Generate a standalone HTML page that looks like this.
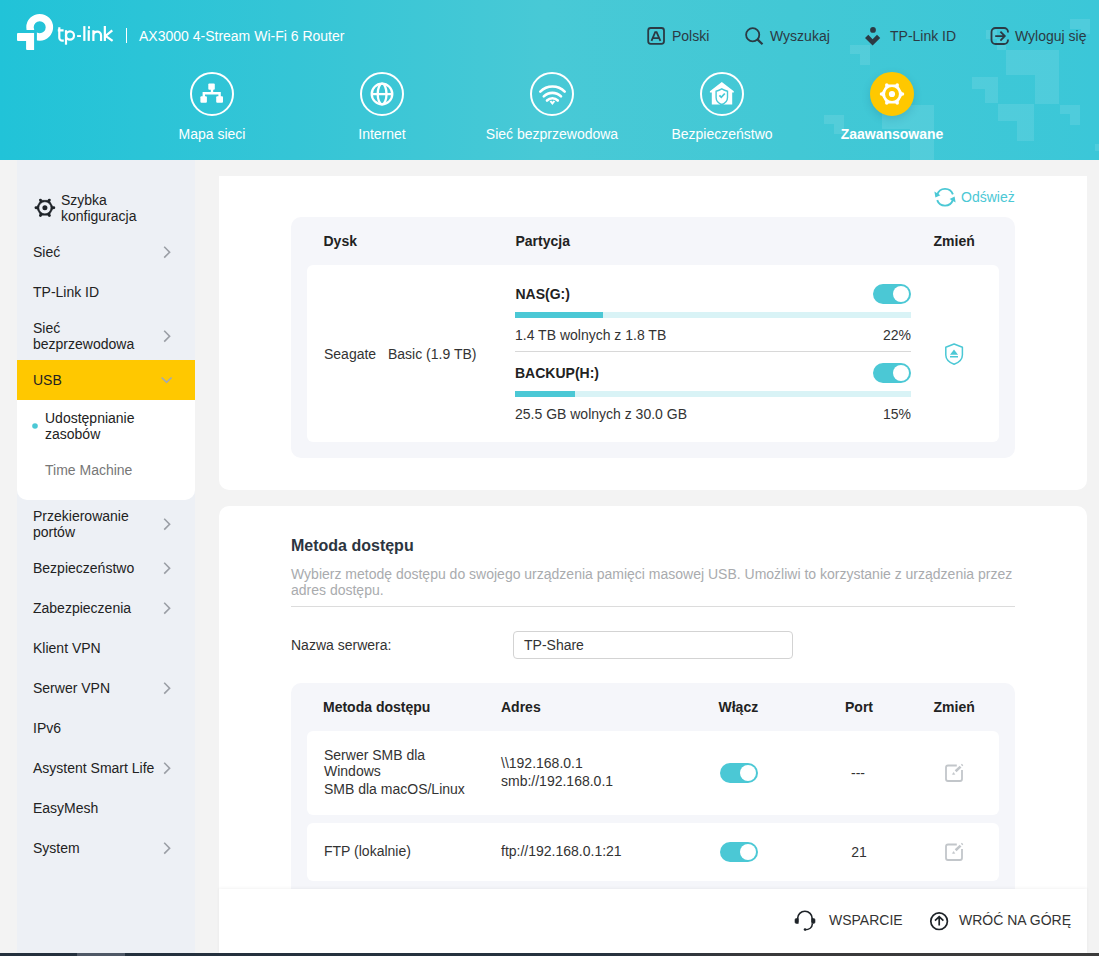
<!DOCTYPE html>
<html><head><meta charset="utf-8">
<style>
*{box-sizing:border-box;margin:0;padding:0}
html,body{width:1099px;height:956px;overflow:hidden}
body{position:relative;background:#f3f3f3;font-family:"Liberation Sans",sans-serif;font-size:14px;color:#222;}
.abs{position:absolute}
svg{position:absolute;overflow:visible}
.t{position:absolute;white-space:nowrap;line-height:16px}
#hdr{left:0;top:0;width:1099px;height:160px;background:linear-gradient(90deg,#21c3d8 0px,#35c5d6 295px,#48c9d6 545px,#42c8d5 795px,#3bc7d8 1099px);overflow:hidden}
.sq{position:absolute;background:rgba(255,255,255,0.10)}
#side{left:17px;top:160px;width:178px;height:793px;background:#edf0f5}
#sub{left:17px;top:400px;width:178px;height:100px;background:#fff;border-radius:0 0 10px 10px}
#usb{left:17px;top:360px;width:178px;height:40px;background:#ffc800}
.card{background:#fff;position:absolute;left:219px;width:868px}
#card1{top:176px;height:314px;border-radius:0 0 10px 10px}
#card2{top:506px;height:447px;border-radius:10px 10px 0 0}
#foot{left:219px;top:889px;width:868px;height:64px;background:#fff;box-shadow:0 -1px 3px rgba(0,0,0,0.05)}
#bar{left:0;top:953px;width:1099px;height:3px;background:linear-gradient(90deg,#24303d 0,#26323f 600px,#39393b 760px,#3b3b3b 1099px)}
.gbox{position:absolute;background:#f5f6fa;border-radius:10px}
.wrow{position:absolute;background:#fff;border-radius:6px}
.b{font-weight:bold}
.tog{position:absolute;width:38px;height:20px;border-radius:10px;background:#4bc8d5}
.tog::after{content:"";position:absolute;right:2px;top:2px;width:16px;height:16px;border-radius:50%;background:#fff}
.navc{position:absolute;width:44px;height:44px;border-radius:50%;border:2px solid #fff}
.navl{position:absolute;color:#fff;width:170px;text-align:center;line-height:16px}
.tn{position:absolute;color:#2b3a44;line-height:16px;white-space:nowrap}
.d{color:#333}
</style></head><body>
<div id="hdr" class="abs">
  <div class="sq" style="left:850px;top:45px;width:20px;height:9px"></div>
  <div class="sq" style="left:860px;top:54px;width:10px;height:11px"></div>
  <div class="sq" style="left:824px;top:115px;width:20px;height:9px"></div>
  <div class="sq" style="left:834px;top:124px;width:10px;height:10px"></div>
  <div class="sq" style="left:882px;top:105px;width:52px;height:24px"></div>
  <div class="sq" style="left:910px;top:129px;width:24px;height:31px"></div>
  <div class="sq" style="left:1070px;top:19px;width:20px;height:10px"></div>
  <div class="sq" style="left:1081px;top:29px;width:9px;height:5px"></div>
  <div class="sq" style="left:986px;top:30px;width:11px;height:9px"></div>
  <div class="sq" style="left:997px;top:39px;width:9px;height:11px"></div>
  <div class="sq" style="left:1006px;top:50px;width:53px;height:25px"></div>
  <div class="sq" style="left:1035px;top:75px;width:24px;height:29px"></div>
  <div class="sq" style="left:972px;top:77px;width:26px;height:12px"></div>
  <div class="sq" style="left:985px;top:89px;width:13px;height:14px"></div>
  <div class="sq" style="left:998px;top:104px;width:36px;height:17px"></div>
  <div class="sq" style="left:1017px;top:121px;width:17px;height:20px"></div>
  <div class="sq" style="left:1060px;top:105px;width:20px;height:9px"></div>
  <div class="sq" style="left:1070px;top:114px;width:10px;height:11px"></div>
  <div class="sq" style="left:1095px;top:144px;width:4px;height:7px"></div>

  <!-- logo -->
  <svg style="left:0;top:0" width="60" height="56" viewBox="0 0 60 56">
    <defs><clipPath id="lc"><path d="M0 0H60V56H36.9V30.1H0Z"/></clipPath></defs>
    <circle cx="39.7" cy="27.3" r="9.7" fill="none" stroke="#fff" stroke-width="7.4" clip-path="url(#lc)"/>
    <path fill="#fff" d="M18 33.1H34.1V49.9H27.1a1 1 0 0 1-1-1V40.9H18a1 1 0 0 1-1-1V34.1a1 1 0 0 1 1-1z"/>
  </svg>
  <svg style="left:0;top:0" width="120" height="56" viewBox="0 0 120 56" fill="none" stroke="#fff" stroke-width="2.2">
    <path d="M59.3 27.2V37.7a3 3 0 0 0 3 3H63.8M57.8 30.3H63.6"/>
    <path d="M66 30.2V44.7"/>
    <ellipse cx="70" cy="35.55" rx="4" ry="4.15"/>
    <path d="M77.1 36.05H81" stroke-width="1.9"/>
    <path d="M84.35 26.1V40.9"/>
    <path d="M88.75 30.2V40.9"/>
    <path d="M93.4 40.9V30.2M93.4 35.2A3.83 3.83 0 0 1 101.05 35.2V40.9"/>
    <path d="M104.85 26.1V40.9M112.3 30.4L105.6 36L112.6 40.9"/>
  </svg>
  <div class="abs" style="left:87.5px;top:26.1px;width:2.5px;height:2.5px;background:#fff;border-radius:1px"></div>
  <div class="abs" style="left:126px;top:28px;width:1px;height:15px;background:#fff"></div>
  <div class="t" style="left:139px;top:28px;color:#fff">AX3000 4-Stream Wi-Fi 6 Router</div>

  <!-- top nav icons -->
  <svg style="left:0;top:0" width="1099" height="60" viewBox="0 0 1099 60" fill="none" stroke="#2b3a44" stroke-width="1.8">
    <rect x="648.2" y="28" width="15.8" height="15.8" rx="2.5"/>
    <path d="M651.5 40.8L655.2 32.2H656.6L660.4 40.8M653 38.2H658.8" stroke-width="1.8"/>
    <circle cx="752.7" cy="34.7" r="6.6"/>
    <path d="M757.4 39.4L762.5 44.2" stroke-width="2.2"/>
    <path d="M1008 32.4V32a4 4 0 0 0-4-4H995.5a4 4 0 0 0-4 4V40a4 4 0 0 0 4 4H1004a4 4 0 0 0 4-4V39.6"/>
    <path d="M995.2 36.1H1004.6M1000.4 31.6L1004.8 36.1L1000.4 40.6"/>
  </svg>
  <svg style="left:0;top:0" width="1099" height="60" viewBox="0 0 1099 60" fill="#2b3a44">
    <circle cx="873" cy="29.9" r="2.9"/>
    <path d="M865 38L868.3 34.8L872.6 39.2L877 34.8L880.2 38L872.6 45.4Z"/>
  </svg>
  <div class="tn" style="left:672px;top:28px">Polski</div>
  <div class="tn" style="left:770px;top:28px">Wyszukaj</div>
  <div class="tn" style="left:890px;top:28px">TP-Link ID</div>
  <div class="tn" style="left:1015px;top:28px">Wyloguj się</div>

  <!-- main nav -->
  <div class="navc" style="left:190px;top:72px"></div>
  <div class="navc" style="left:360px;top:72px"></div>
  <div class="navc" style="left:530px;top:72px"></div>
  <div class="navc" style="left:700px;top:72px"></div>
  <div class="navc" style="left:870px;top:72px;background:#ffc800;border-color:#ffc800;box-shadow:0 3px 8px rgba(20,80,110,0.18)"></div>
  <svg style="left:0;top:0" width="1099" height="160" viewBox="0 0 1099 160" fill="#fff">
    <!-- network map -->
    <rect x="208.3" y="83.5" width="6.5" height="6.3" rx="1"/>
    <rect x="200.4" y="96.3" width="6.5" height="6.5" rx="1"/>
    <rect x="216.2" y="96.3" width="6.8" height="6.5" rx="1"/>
    <path d="M210.8 89H213.2V91.9H220.8V97H218.4V94.5H205V97H202.6V91.9H210.8Z"/>
    <!-- globe -->
    <g fill="none" stroke="#fff" stroke-width="2.3">
      <circle cx="382" cy="94" r="10.3"/>
      <ellipse cx="382.1" cy="94" rx="4.4" ry="10.3"/>
      <path d="M371.7 94.1H392.3"/>
    </g>
    <!-- wifi -->
    <g fill="none" stroke="#fff" stroke-width="2.6" stroke-linecap="round">
      <path d="M540.3 91.6A17.2 17.2 0 0 1 564.7 91.6"/>
      <path d="M543.8 96.4A12.2 12.2 0 0 1 561 96.4"/>
      <path d="M547 100.5A7.6 7.6 0 0 1 557.8 100.5"/>
    </g>
    <path d="M549.6 101.4L551.1 100.6L552.4 101.8L553.7 100.6L555.2 101.4L552.4 105Z"/>
    <!-- house -->
    <path d="M721.8 81.9L733.8 91.3V92.4H732.2V104.5H711.8V92.4H709.9V91.3Z"/>
    <path d="M716.1 91.2Q719 90.6 721.8 88.9Q724.6 90.6 727.5 91.2V97.6C727.5 100.8 724.6 103.6 721.8 104.8C719 103.6 716.1 100.8 716.1 97.6Z" fill="none" stroke="#45c9d7" stroke-width="1.4"/>
    <path d="M719.4 95.3L721.3 97.3L724.8 93.5" fill="none" stroke="#45c9d7" stroke-width="1.8"/>
    <rect x="720.3" y="103.6" width="3.1" height="1.2" fill="#45c9d7"/>
    <!-- gear yellow -->
    <g transform="translate(892 94)">
      <path d="M10.30 0.00 L5.15 8.92 L-5.15 8.92 L-10.30 0.00 L-5.15 -8.92 L5.15 -8.92Z" stroke="#fff" stroke-width="1.3" stroke-linejoin="round"/>
      <circle cx="10.50" cy="0.00" r="1.75"/><circle cx="5.25" cy="9.09" r="1.75"/><circle cx="-5.25" cy="9.09" r="1.75"/><circle cx="-10.50" cy="0.00" r="1.75"/><circle cx="-5.25" cy="-9.09" r="1.75"/><circle cx="5.25" cy="-9.09" r="1.75"/>
      <circle r="6.95" fill="#ffc800"/>
      <circle r="3.1"/>
    </g>
  </svg>
  <div class="navl" style="left:127px;top:126px">Mapa sieci</div>
  <div class="navl" style="left:297px;top:126px">Internet</div>
  <div class="navl" style="left:467px;top:126px">Sieć bezprzewodowa</div>
  <div class="navl" style="left:637px;top:126px">Bezpieczeństwo</div>
  <div class="navl b" style="left:807px;top:126px">Zaawansowane</div>
</div>

<!-- SIDEBAR -->
<div id="side" class="abs"></div>
<div id="usb" class="abs"></div>
<div id="sub" class="abs"></div>
<svg style="left:0;top:0" width="200" height="960" viewBox="0 0 200 960">
  <g transform="translate(44.9 207.8)" fill="#1e2328">
    <path fill-rule="evenodd" d="M8.60 0.00 L4.30 7.45 L-4.30 7.45 L-8.60 0.00 L-4.30 -7.45 L4.30 -7.45Z M6.0 0A6.0 6.0 0 1 0 -6.0 0A6.0 6.0 0 1 0 6.0 0Z" stroke="#1e2328" stroke-width="0.5" stroke-linejoin="round"/>
    <circle cx="8.90" cy="0.00" r="1.45"/><circle cx="4.45" cy="7.71" r="1.45"/><circle cx="-4.45" cy="7.71" r="1.45"/><circle cx="-8.90" cy="0.00" r="1.45"/><circle cx="-4.45" cy="-7.71" r="1.45"/><circle cx="4.45" cy="-7.71" r="1.45"/>
    <circle r="2.5"/>
  </g>
  <g fill="none" stroke="#9a9ea5" stroke-width="1.6">
    <path d="M164.2 246.8L169.6 252.2L164.2 257.6"/>
    <path d="M164.2 330.8L169.6 336.2L164.2 341.6"/>
    <path d="M164.2 518.8L169.6 524.2L164.2 529.6"/>
    <path d="M164.2 562.8L169.6 568.2L164.2 573.6"/>
    <path d="M164.2 602.8L169.6 608.2L164.2 613.6"/>
    <path d="M164.2 682.8L169.6 688.2L164.2 693.6"/>
    <path d="M164.2 762.8L169.6 768.2L164.2 773.6"/>
    <path d="M164.2 842.8L169.6 848.2L164.2 853.6"/>
    <path d="M161.6 377.5L166.6 382.3L171.6 377.5" stroke="#a3a9b4"/>
  </g>
  <circle cx="35" cy="426" r="2.8" fill="#4bc8d5"/>
</svg>
<div class="t" style="left:61px;top:192px">Szybka</div>
<div class="t" style="left:61px;top:208px">konfiguracja</div>
<div class="t" style="left:33px;top:244px">Sieć</div>
<div class="t" style="left:33px;top:284px">TP-Link ID</div>
<div class="t" style="left:33px;top:320px">Sieć</div>
<div class="t" style="left:33px;top:336px">bezprzewodowa</div>
<div class="t" style="left:33px;top:372px">USB</div>
<div class="t" style="left:45px;top:410px">Udostępnianie</div>
<div class="t" style="left:45px;top:426px">zasobów</div>
<div class="t" style="left:45px;top:462px;color:#777">Time Machine</div>
<div class="t" style="left:33px;top:508px">Przekierowanie</div>
<div class="t" style="left:33px;top:524px">portów</div>
<div class="t" style="left:33px;top:560px">Bezpieczeństwo</div>
<div class="t" style="left:33px;top:600px">Zabezpieczenia</div>
<div class="t" style="left:33px;top:640px">Klient VPN</div>
<div class="t" style="left:33px;top:680px">Serwer VPN</div>
<div class="t" style="left:33px;top:720px">IPv6</div>
<div class="t" style="left:33px;top:760px">Asystent Smart Life</div>
<div class="t" style="left:33px;top:800px">EasyMesh</div>
<div class="t" style="left:33px;top:840px">System</div>
<!-- CONTENT -->
<div id="card1" class="card"></div>
<svg style="left:0;top:0" width="1099" height="960" viewBox="0 0 1099 960">
  <g fill="none" stroke="#4bc8d5" stroke-width="1.9">
    <path d="M937.2 194.6A8.3 8.3 0 0 1 952.9 194.3"/>
    <path d="M952.9 199.9A8.3 8.3 0 0 1 937.2 200.1"/>
  </g>
  <path d="M934.4 191.6L935.4 197.6L940.4 195.2Z" fill="#4bc8d5"/>
  <path d="M955.6 202.6L954.6 196.6L949.6 199Z" fill="#4bc8d5"/>
</svg>
<div class="t" style="left:961px;top:189px;color:#4bc8d5">Odśwież</div>
<div class="gbox" style="left:291px;top:217px;width:724px;height:241px"></div>
<div class="t b" style="left:323.5px;top:233px">Dysk</div>
<div class="t b" style="left:515.5px;top:233px">Partycja</div>
<div class="t b" style="left:933.5px;top:233px">Zmień</div>
<div class="wrow" style="left:307px;top:265px;width:692px;height:177px"></div>
<div class="t d" style="left:324px;top:346px">Seagate</div>
<div class="t d" style="left:388px;top:346px">Basic (1.9 TB)</div>
<div class="t b" style="left:515.5px;top:286px">NAS(G:)</div>
<div class="tog" style="left:873px;top:284px"></div>
<div class="abs" style="left:515px;top:312px;width:396px;height:6px;background:#d9f3f6"></div>
<div class="abs" style="left:515px;top:312px;width:88px;height:6px;background:#4bc8d5"></div>
<div class="t d" style="left:515px;top:327px">1.4 TB wolnych z 1.8 TB</div>
<div class="t d" style="left:811px;top:327px;width:100px;text-align:right">22%</div>
<div class="abs" style="left:515px;top:351px;width:396px;height:1px;background:#d8d8d8"></div>
<div class="t b" style="left:515px;top:365px">BACKUP(H:)</div>
<div class="tog" style="left:873px;top:363px"></div>
<div class="abs" style="left:515px;top:391px;width:396px;height:6px;background:#d9f3f6"></div>
<div class="abs" style="left:515px;top:391px;width:60px;height:6px;background:#4bc8d5"></div>
<div class="t d" style="left:515px;top:406px">25.5 GB wolnych z 30.0 GB</div>
<div class="t d" style="left:811px;top:406px;width:100px;text-align:right">15%</div>
<svg style="left:0;top:0" width="1099" height="960" viewBox="0 0 1099 960">
  <path d="M954.1 344L962.4 347.2V355C962.4 359 958.5 362.6 954.1 364.3C949.7 362.6 945.8 359 945.8 355V347.2Z" fill="none" stroke="#4bc8d5" stroke-width="1.5" stroke-linejoin="round"/>
  <path d="M954 349.6L958 354.8H950Z" fill="#4bc8d5"/>
  <rect x="950" y="356" width="8" height="1.5" fill="#4bc8d5"/>
</svg>

<div id="card2" class="card"></div>
<div class="t b" style="left:291px;top:538px;font-size:16px;color:#2c3540">Metoda dostępu</div>
<div class="t" style="left:291px;top:566px;color:#a9abae">Wybierz metodę dostępu do swojego urządzenia pamięci masowej USB. Umożliwi to korzystanie z urządzenia przez</div>
<div class="t" style="left:291px;top:582px;color:#a9abae">adres dostępu.</div>
<div class="abs" style="left:291px;top:606px;width:724px;height:1px;background:#dcdcdc"></div>
<div class="t d" style="left:291px;top:637px">Nazwa serwera:</div>
<div class="abs" style="left:513px;top:631px;width:280px;height:28px;border:1px solid #d3d3d3;border-radius:4px"></div>
<div class="t d" style="left:524px;top:637px">TP-Share</div>
<div class="gbox" style="left:291px;top:683px;width:724px;height:280px"></div>
<div class="t b" style="left:323px;top:699px">Metoda dostępu</div>
<div class="t b" style="left:501px;top:699px">Adres</div>
<div class="t b" style="left:718.5px;top:699px">Włącz</div>
<div class="t b" style="left:845px;top:699px">Port</div>
<div class="t b" style="left:933.5px;top:699px">Zmień</div>
<div class="wrow" style="left:307px;top:731px;width:692px;height:84px"></div>
<div class="t d" style="left:324px;top:747px">Serwer SMB dla</div>
<div class="t d" style="left:324px;top:763px">Windows</div>
<div class="t d" style="left:324px;top:781px">SMB dla macOS/Linux</div>
<div class="t d" style="left:501px;top:755px">\\192.168.0.1</div>
<div class="t d" style="left:501px;top:773px">smb://192.168.0.1</div>
<div class="tog" style="left:720px;top:763px"></div>
<div class="t d" style="left:808px;top:765px;width:100px;text-align:center">---</div>
<div class="wrow" style="left:307px;top:823px;width:692px;height:58px"></div>
<div class="t d" style="left:324px;top:843px">FTP (lokalnie)</div>
<div class="t d" style="left:501px;top:843px">ftp://192.168.0.1:21</div>
<div class="tog" style="left:720px;top:842px"></div>
<div class="t d" style="left:809px;top:844px;width:100px;text-align:center">21</div>
<svg style="left:0;top:0" width="1099" height="960" viewBox="0 0 1099 960" fill="none" stroke="#c2c6ca" stroke-width="1.8">
  <g id="ed1">
    <path d="M956.8 765.5H948a2 2 0 0 0-2 2V779a2 2 0 0 0 2 2H960a2 2 0 0 0 2-2V770"/>
    <path d="M955.6 771.2L960.6 766.6" stroke-width="2.6"/>
    <path d="M961.4 764.3L962.8 765.8" stroke-width="1.3"/>
    <path d="M952.4 774.4L953.6 772.4L954.8 774.4Z" fill="#c2c6ca" stroke-width="0.5"/>
  </g>
  <use href="#ed1" y="79"/>
</svg>
<!-- FOOTER -->
<div id="foot" class="abs"></div>
<svg style="left:0;top:0" width="1099" height="960" viewBox="0 0 1099 960" fill="none" stroke="#1e2328" stroke-width="1.6">
  <path d="M797.6 922V918.6A7.3 7.3 0 0 1 812.2 918.6V922"/>
  <path d="M812.4 923.8C812.2 927.5 809 929.8 805 929.8"/>
  <path d="M796.3 918.6H798.3V923.4H796.3a1.3 1.3 0 0 1-1.3-1.3V919.9a1.3 1.3 0 0 1 1.3-1.3Z" fill="#1e2328" stroke-width="0.6"/>
  <path d="M813.7 918.6H811.7V923.4H813.7a1.3 1.3 0 0 0 1.3-1.3V919.9a1.3 1.3 0 0 0-1.3-1.3Z" fill="#1e2328" stroke-width="0.6"/>
  <circle cx="805" cy="929.5" r="1.3" fill="#1e2328" stroke="none"/>
  <circle cx="939.1" cy="921.2" r="8.3" stroke-width="1.7"/>
  <path d="M939.2 917V925.6M935 920.6L939.2 916.6L943.4 920.6" stroke-width="1.7"/>
</svg>
<div class="t" style="left:829px;top:912px;color:#333">WSPARCIE</div>
<div class="t" style="left:959px;top:912px;color:#333">WRÓĆ NA GÓRĘ</div>
<div id="bar" class="abs"></div>
<div class="abs" style="left:77px;top:953px;width:48px;height:3px;background:#4f5866"></div>
</body></html>
